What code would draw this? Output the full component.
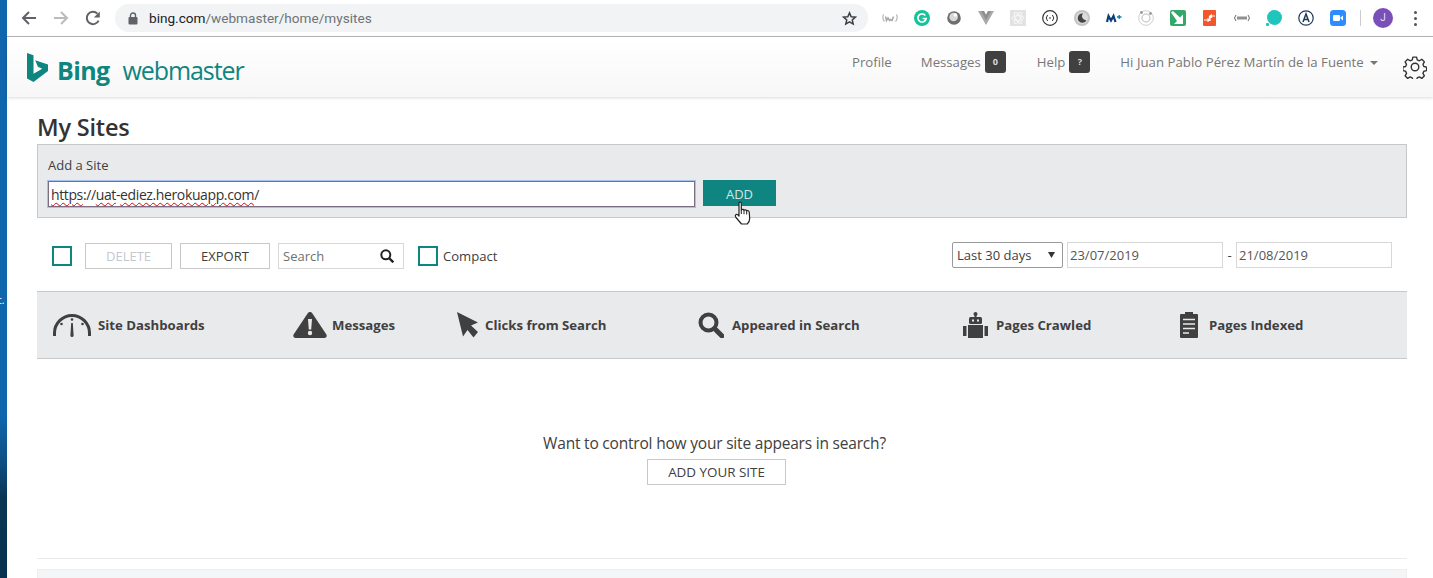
<script>
  const tabs = ['Site Dashboards','Messages','Clicks from Search','Appeared in Search','Pages Crawled','Pages Indexed'];
</script>

<div class="screen">
  <div class="desktop"><span class="deskmark">c.</span></div>
  <div class="window">
    <div class="chrome">
      <div class="navs">
        <svg width="16" height="16" viewBox="0 0 16 16"><path d="M15 8H2.500M8 2 2 8l6 6" fill="none" stroke="#5f6368" stroke-width="2"/></svg>
        <svg width="16" height="16" viewBox="0 0 16 16"><path d="M1 8h12.500M8 2l6 6-6 6" fill="none" stroke="#b9bbbe" stroke-width="2"/></svg>
        <svg width="16" height="16" viewBox="0 0 16 16"><path d="M13.600 10.600A6.200 6.200 0 1 1 12.400 3.600" fill="none" stroke="#5f6368" stroke-width="2"/><path d="M14.800 1.400v6h-6z" fill="#5f6368"/></svg>
      </div>
      <div class="omni">
        <svg width="10" height="13" viewBox="0 0 10 13"><rect x="0.500" y="5" width="9" height="7.500" rx="1" fill="#5f6368"/><path d="M2.500 5V3.500a2.500 2.500 0 0 1 5 0V5" fill="none" stroke="#5f6368" stroke-width="1.400"/></svg>
        <span class="url"><b>bing.com</b>/webmaster/home/mysites</span>
        <svg class="star" width="15" height="15" viewBox="0 0 24 24"><path d="m12 3 2.700 6.200 6.800.6-5.100 4.500 1.500 6.600L12 17.400l-5.900 3.500 1.500-6.600-5.100-4.500 6.800-.6z" fill="none" stroke="#3c4043" stroke-width="2.400"/></svg>
      </div>
      <div class="exts">
        <svg width="16" height="16" viewBox="0 0 16 16"><path d="M1.500 4.500C.5 7 1 10 2.500 11.500M14.500 4.500C15.500 7 15 10 13.500 11.500" fill="none" stroke="#b5b5b5" stroke-width="1.200"/><path d="M3.500 6.500l1 4 1.500-2.500 1.500 2.500 1-1 1.500 1 1.500-4" fill="none" stroke="#a8a8a8" stroke-width="1.500"/></svg>
        <svg width="16" height="16" viewBox="0 0 16 16"><circle cx="8" cy="8" r="8" fill="#15c39a"/><path d="M11.300 5.400A4.100 4.100 0 1 0 12.100 8.500H8.600" fill="none" stroke="#fff" stroke-width="1.700"/></svg>
        <svg width="16" height="16" viewBox="0 0 16 16"><circle cx="8" cy="8" r="6.800" fill="#6e6e6e"/><circle cx="7.600" cy="7" r="4.300" fill="#d8d8d8"/><circle cx="9.500" cy="5" r="1.800" fill="#fff"/></svg>
        <svg width="16" height="16" viewBox="0 0 16 16"><path d="M0 1h6l2 4 2-4h6L8 15z" fill="#a8a8a8"/><path d="M3 1h3l2 4 2-4h3L8 10z" fill="#8f8f8f"/></svg>
        <svg width="16" height="16" viewBox="0 0 16 16"><rect width="16" height="16" fill="#e2e2e2"/><g fill="none" stroke="#f7f7f7"><ellipse cx="8" cy="8" rx="6" ry="2.400"/><ellipse cx="8" cy="8" rx="6" ry="2.400" transform="rotate(60 8 8)"/><ellipse cx="8" cy="8" rx="6" ry="2.400" transform="rotate(120 8 8)"/></g></svg>
        <svg width="16" height="16" viewBox="0 0 16 16"><circle cx="8" cy="8" r="7.300" fill="none" stroke="#333" stroke-width="1.200"/><path d="M5.600 5 4.200 8l1.400 3M10.400 5l1.400 3-1.400 3M7 8h2" fill="none" stroke="#333"/></svg>
        <svg width="16" height="16" viewBox="0 0 16 16"><circle cx="8" cy="8" r="8" fill="#c4c4c4"/><circle cx="8" cy="8" r="6" fill="#dcdcdc"/><path d="M9 3.600a4.600 4.600 0 1 0 3.500 6.600A4 4 0 0 1 9 3.600z" fill="#444"/></svg>
        <svg width="16" height="16" viewBox="0 0 16 16"><path d="M1 12 2.500 6 5 10.500 7.500 6 9.500 12" fill="none" stroke="#0b3d78" stroke-width="2.200"/><path d="M11 7h4.500M13.200 5v4" stroke="#0b7bb5" stroke-width="1.300"/></svg>
        <svg width="16" height="16" viewBox="0 0 16 16"><circle cx="8" cy="8" r="7.300" fill="none" stroke="#d0d0d0"/><circle cx="8" cy="8" r="4" fill="none" stroke="#d0d0d0" stroke-width="1.500"/><circle cx="3.500" cy="2.500" r="1.400" fill="#999"/><circle cx="12.500" cy="3.500" r="1.400" fill="#999"/></svg>
        <svg width="16" height="16" viewBox="0 0 16 16"><rect width="16" height="16" rx="2" fill="#34a869"/><path d="M1 2.500 3 1l7 6.500L13 4.500V14H4l3-3z" fill="#fff"/></svg>
        <svg width="16" height="16" viewBox="0 0 16 16"><rect x="1" width="13" height="16" rx="1" fill="#f4562b"/><path d="M2 10h5.500V6M13 6H8v5M10 4.500 8 6l2 1.500M5.500 8.500 7.500 10l-2 1.500" fill="none" stroke="#fff" stroke-width="1.200"/></svg>
        <svg width="16" height="16" viewBox="0 0 16 16"><path d="M2 5 .5 8 2 11M14 5l1.500 3L14 11" fill="none" stroke="#666"/><path d="M4 6.500v3M6 6.500v3M8 6.500v3M10 6.500v3M12 6.500v3" stroke="#555" stroke-width="1.300"/></svg>
        <svg width="16" height="16" viewBox="0 0 16 16"><circle cx="8.500" cy="7.500" r="7.500" fill="#1fc4bb"/><rect x="0" y="13" width="3" height="3" rx="1" fill="#1fc4bb"/></svg>
        <svg width="16" height="16" viewBox="0 0 16 16"><circle cx="8" cy="8" r="7.200" fill="none" stroke="#1b3a5c" stroke-width="1.200"/><path d="M5 12 8 4l3 8M6 9.500h4" fill="none" stroke="#1b3a5c" stroke-width="1.500"/></svg>
        <svg width="16" height="16" viewBox="0 0 16 16"><rect width="16" height="16" rx="3.500" fill="#2d8cff"/><rect x="3" y="5" width="7" height="6" rx="1.200" fill="#fff"/><path d="M10.500 7.500 13 5.500v5l-2.500-2z" fill="#fff"/></svg>
      </div>
      <div class="sep"></div>
      <div class="avatar">J</div>
      <div class="kebab"><i></i><i></i><i></i></div>
    </div>

    <header class="site">
      <div class="brand">
        <svg width="22" height="29" viewBox="0 0 22 29"><path d="M0 0l6.500 2.200v18.500l8.700-5-4.300-2-2.700-6.500L21 11.500v6.500L6.500 29 0 25.500z" fill="#0f8580"/></svg>
        <span class="bing">Bing</span>
        <span class="wm">webmaster</span>
      </div>
      <nav>
        <span class="lnk profile">Profile</span>
        <span class="lnk msg">Messages</span><span class="badge b0">0</span>
        <span class="lnk help">Help</span><span class="badge b1">?</span>
        <span class="lnk user">Hi Juan Pablo Pérez Martín de la Fuente</span><span class="caret"></span>
        <svg class="gear" width="24" height="24" viewBox="0 0 24 24"><path d="M10 1.500h4l.7 3 2.300 1 2.700-1.600 2.800 2.800-1.600 2.700 1 2.300 3 .7v3.800l-3 .7-1 2.300 1.600 2.700-2.800 2.800-2.700-1.600-2.300 1-.7 3h-4l-.7-3-2.300-1-2.700 1.600-2.800-2.800 1.600-2.700-1-2.300-3-.7v-3.800l3-.7 1-2.300L1.500 6.700l2.800-2.800L7 5.500l2.300-1z" transform="translate(.7 .7) scale(.92)" fill="none" stroke="#333" stroke-width="1.500" stroke-linejoin="round"/><circle cx="12" cy="12" r="3.800" fill="none" stroke="#333" stroke-width="1.400"/></svg>
      </nav>
    </header>

    <main>
      <h1>My Sites</h1>
      <section class="add">
        <label for="site">Add a Site</label>
        <div class="addrow">
          <div class="input" id="site"><span class="sq">https</span>://<span class="sq">uat</span>-<span class="sq">ediez.herokuapp.com</span>/</div>
          <button class="addbtn">ADD
            <svg class="cursor" width="20" height="25" viewBox="0 0 20 25"><path d="M5 1.500c1.200-.8 2.300 0 2.300 1.200V9c.6-.9 2.300-.9 2.700.2.700-.7 2.300-.5 2.700.6.800-.5 2.300-.1 2.500 1.200l.5 6.500c0 2.600-1.300 4.500-2.500 5.500H7.500L2 16.500c-1-1.400-.8-2.600.3-3 .9-.3 1.700.3 2.700 1.500z" fill="#fff" stroke="#222" stroke-width="1.200" stroke-linejoin="round"/><path d="M7.300 9v4M10 9.200v4M12.700 10v3.500" stroke="#222"/></svg>
          </button>
        </div>
      </section>

      <div class="tools">
        <span class="check c1"></span>
        <span class="btn del">DELETE</span>
        <span class="btn exp">EXPORT</span>
        <div class="search"><span>Search</span>
          <svg width="14" height="14" viewBox="0 0 14 14"><circle cx="5.800" cy="5.800" r="4.500" fill="none" stroke="#222" stroke-width="2"/><path d="m9 9 4.300 4.300" stroke="#222" stroke-width="2.400"/></svg>
        </div>
        <span class="check c2"></span>
        <span class="compact">Compact</span>
        <div class="dates">
          <div class="select"><span>Last 30 days</span><svg width="7" height="6" viewBox="0 0 7 6"><path d="M0 0h7L3.500 6z" fill="#333"/></svg></div>
          <div class="date d1">23/07/2019</div>
          <span class="dash">-</span>
          <div class="date">21/08/2019</div>
        </div>
      </div>

      <div class="tabs">
        <div class="tab t0">
          <svg width="40" height="25" viewBox="0 0 40 25"><path d="M2.500 23v-3a17.500 17.500 0 0 1 35 0v3" fill="none" stroke="#404040" stroke-width="3"/><path d="M19.200 10h1.600l.8 12.500a1.600 1.600 0 0 1-3.200 0z" fill="#404040"/><circle cx="20" cy="6.500" r="1.300" fill="#404040"/><circle cx="9.500" cy="11" r="1.300" fill="#404040"/><circle cx="30.500" cy="11" r="1.300" fill="#404040"/></svg>
          <span>{tabs[0]}</span>
        </div>
        <div class="tab t1">
          <svg width="34" height="26" viewBox="0 0 34 26"><path d="M17 0c1 0 2 .6 2.600 1.700l13.800 20.800c.9 1.600 0 3.500-2 3.500H2.600c-2 0-2.900-1.900-2-3.500L14.400 1.700C15 .6 16 0 17 0z" fill="#404040"/><path d="M15 7h4l-.8 10.500h-2.400z" fill="#e9eaec"/><circle cx="17" cy="21" r="2.200" fill="#e9eaec"/></svg>
          <span>{tabs[1]}</span>
        </div>
        <div class="tab t2">
          <svg width="22" height="26" viewBox="0 0 22 26"><path d="M0 0l21 10.500-7 3L21 20l-4.500 5.500-6-7.500-4.500 6.500z" fill="#404040"/></svg>
          <span>{tabs[2]}</span>
        </div>
        <div class="tab t3">
          <svg width="26" height="26" viewBox="0 0 26 26"><circle cx="10.500" cy="10.500" r="8" fill="none" stroke="#404040" stroke-width="4"/><path d="m16.500 16.500 7.500 7.500" stroke="#404040" stroke-width="5" stroke-linecap="round"/></svg>
          <span>{tabs[3]}</span>
        </div>
        <div class="tab t4">
          <svg width="25" height="26" viewBox="0 0 25 26"><circle cx="12.500" cy="2" r="2" fill="#404040"/><rect x="11.500" y="2" width="2" height="4" fill="#404040"/><rect x="6" y="5" width="13" height="7" rx="1.500" fill="#404040"/><rect x="9" y="7.500" width="2" height="2" fill="#e9eaec"/><rect x="14" y="7.500" width="2" height="2" fill="#e9eaec"/><rect x="5" y="13" width="15" height="13" fill="#404040"/><rect x="0" y="14" width="3.500" height="10" fill="#404040"/><rect x="21.500" y="14" width="3.500" height="10" fill="#404040"/></svg>
          <span>{tabs[4]}</span>
        </div>
        <div class="tab t5">
          <svg width="18" height="26" viewBox="0 0 18 26"><path d="M1 2h4V0h8v2h4a1 1 0 0 1 1 1v22a1 1 0 0 1-1 1H1a1 1 0 0 1-1-1V3a1 1 0 0 1 1-1z" fill="#404040"/><path d="M3 7.500h12M3 12h12M3 16.500h12M3 21h6" stroke="#e9eaec" stroke-width="1.300"/></svg>
          <span>{tabs[5]}</span>
        </div>
      </div>

      <div class="empty">
        <p>Want to control how your site appears in search?</p>
        <span class="btn yoursite">ADD YOUR SITE</span>
      </div>

      <div class="rule"></div>
      <div class="foot"></div>
    </main>
  </div>
</div>

<style>
  :global(body) { margin: 0; background: #fff; }
  .screen { display: flex; width: 1433px; height: 578px; overflow: hidden; font-family: "Open Sans", "Noto Sans", sans-serif; color: #404040; }
  .desktop { width: 7px; flex: none; position: relative; overflow: hidden; background: linear-gradient(#0f66ad 0, #0f66ad 72%, #0e4f82 80%, #0a3554 86%, #07314f 100%); }
  .deskmark { position: absolute; left: -3px; top: 294px; font-size: 10px; line-height: 12px; color: #fff; }
  .window { flex: 1; min-width: 0; background: #fff; }

  .chrome { height: 36px; border-bottom: 1px solid #b5b5b5; display: flex; align-items: center; background: #fff; }
  .navs { display: flex; gap: 16px; margin-left: 14px; width: 94px; flex: none; align-items: center; }
  .navs svg { flex: none; }
  .omni { width: 753px; height: 28px; border-radius: 14px; background: #f1f3f4; display: flex; align-items: center; flex: none; box-sizing: border-box; padding: 0 11px 0 13px; }
  .url { margin-left: 11px; color: #6f7377; flex: 1; font-family: "Roboto", sans-serif; font-size: 13.600px; }
  .url b { font-weight: 400; color: #202124; }
  .exts { display: flex; gap: 16px; margin-left: 14px; flex: none; align-items: center; }
  .sep { width: 1px; height: 16px; background: #ccc; margin-left: 14px; }
  .avatar { width: 20px; height: 20px; border-radius: 50%; background: #7b4fb8; color: #e8dff5; font: 10px/20px "Roboto", sans-serif; text-align: center; margin-left: 12px; flex: none; }
  .kebab { display: flex; flex-direction: column; gap: 3px; margin-left: 21px; }
  .kebab i { width: 3px; height: 3px; border-radius: 50%; background: #555; }

  .site { height: 60px; display: flex; align-items: flex-start; background: linear-gradient(#fff, #f7f7f7); box-shadow: 0 1px 3px rgba(0,0,0,.15); position: relative; }
  .brand { display: flex; align-items: flex-start; margin-left: 20px; width: 740px; flex: none; padding-top: 16px; }
  .bing { font: 700 25px/34px "Open Sans", sans-serif; color: #0f8580; margin-left: 8px; letter-spacing: -.6px; }
  .wm { font: 400 25px/34px "Open Sans", sans-serif; color: #0f8580; margin-left: 13px; letter-spacing: -1.100px; }
  nav { display: flex; align-items: flex-start; padding-top: 14px; margin-left: 85px; }
  .lnk { font-size: 13.200px; line-height: 22px; color: #777; white-space: nowrap; }
  .msg { margin-left: 29px; }
  .help { margin-left: 31px; }
  .user { margin-left: 30px; letter-spacing: .03px; }
  .badge { width: 21px; height: 22px; border-radius: 3px; background: #404040; color: #ddd; font-size: 9px; font-weight: 700; line-height: 22px; text-align: center; margin-left: 4px; }
  .caret { border: 4px solid transparent; border-top-color: #777; border-bottom: 0; margin: 10px 0 0 6px; }
  .gear { margin: 4px 0 0 25px; flex: none; }

  main { padding: 14px 26px 0 30px; }
  h1 { margin: 0 0 1px; font-size: 23.500px; font-weight: 600; line-height: 32px; color: #333; letter-spacing: -.2px; }
  .add { height: 74px; box-sizing: border-box; background: #e9eaec; border: 1px solid #c8c8c8; padding: 11px 10px 0; }
  label { display: block; font-size: 13px; line-height: 19px; color: #404040; }
  .addrow { display: flex; gap: 8px; margin-top: 6px; align-items: flex-start; }
  .input { width: 647px; height: 26px; box-sizing: border-box; background: #fff; border: 1px solid #7d6d83; box-shadow: 0 0 0 1px #a8c0ee; font-size: 14px; line-height: 25px; padding-left: 2px; color: #333; letter-spacing: -.38px; white-space: nowrap; }
  .sq { text-decoration: underline wavy #e00 1px; text-underline-offset: 2px; }
  .addbtn { width: 73px; height: 26px; margin-top: -1px; border: 0; padding: 2px 0 0; background: #0e8580; color: #cfe6e6; font: 13px "Open Sans", sans-serif; position: relative; }
  .cursor { position: absolute; left: 31px; top: 21px; }

  .tools { display: flex; align-items: center; height: 26px; margin-top: 25px; }
  .check { width: 16px; height: 16px; border: 2px solid #0e8580; flex: none; }
  .c1 { margin-left: 15px; }
  .btn { display: inline-block; box-sizing: border-box; height: 26px; border: 1px solid #c8c8c8; font-size: 13px; line-height: 24px; text-align: center; color: #404040; background: #fff; }
  .del { width: 87px; margin-left: 13px; color: #c4c8d0; }
  .exp { width: 90px; margin-left: 8px; }
  .search { width: 126px; height: 26px; box-sizing: border-box; border: 1px solid #d8d8d8; margin-left: 8px; display: flex; align-items: center; justify-content: space-between; padding: 0 9px 0 4px; font-size: 13px; color: #707070; }
  .c2 { margin-left: 14px; }
  .compact { font-size: 13.100px; margin-left: 5px; }
  .dates { margin: 0 15px 2px auto; display: flex; align-items: center; font-size: 13px; }
  .select { width: 111px; height: 26px; box-sizing: border-box; border: 1px solid #999; border-radius: 2px; display: flex; align-items: center; justify-content: space-between; padding: 0 7px 0 4px; }
  .date { width: 156px; height: 26px; box-sizing: border-box; border: 1px solid #d8d8d8; padding-left: 2px; line-height: 24px; color: #555; }
  .d1 { margin-left: 4px; }
  .dash { width: 13px; text-align: center; }

  .tabs { height: 68px; box-sizing: border-box; margin-top: 22px; background: #e9eaec; border-top: 1px solid #c8c8c8; border-bottom: 1px solid #c8c8c8; display: flex; align-items: center; }
  .tab { display: flex; align-items: center; gap: 6px; font-size: 13.200px; font-weight: 700; color: #404040; flex: none; white-space: nowrap; }
  .tab svg { flex: none; }
  .t0 { margin-left: 15px; width: 241px; }
  .t1 { width: 164px; gap: 5px; }
  .t2 { width: 241px; }
  .t3 { width: 265px; gap: 8px; }
  .t4 { width: 217px; gap: 8px; }
  .t5 { gap: 11px; }

  .empty { text-align: center; padding: 73px 11px 0 0; height: 126px; font-size: 15.500px; }
  .empty p { margin: 0 4px 0 0; line-height: 22px; color: #404040; letter-spacing: -.2px; }
  .yoursite { width: 139px; margin-top: 5px; font-size: 13.400px; }
  .rule { height: 1px; background: #eaeaea; }
  .foot { height: 20px; margin-top: 10px; background: #f4f5f6; border: 1px solid #eee; }
</style>
